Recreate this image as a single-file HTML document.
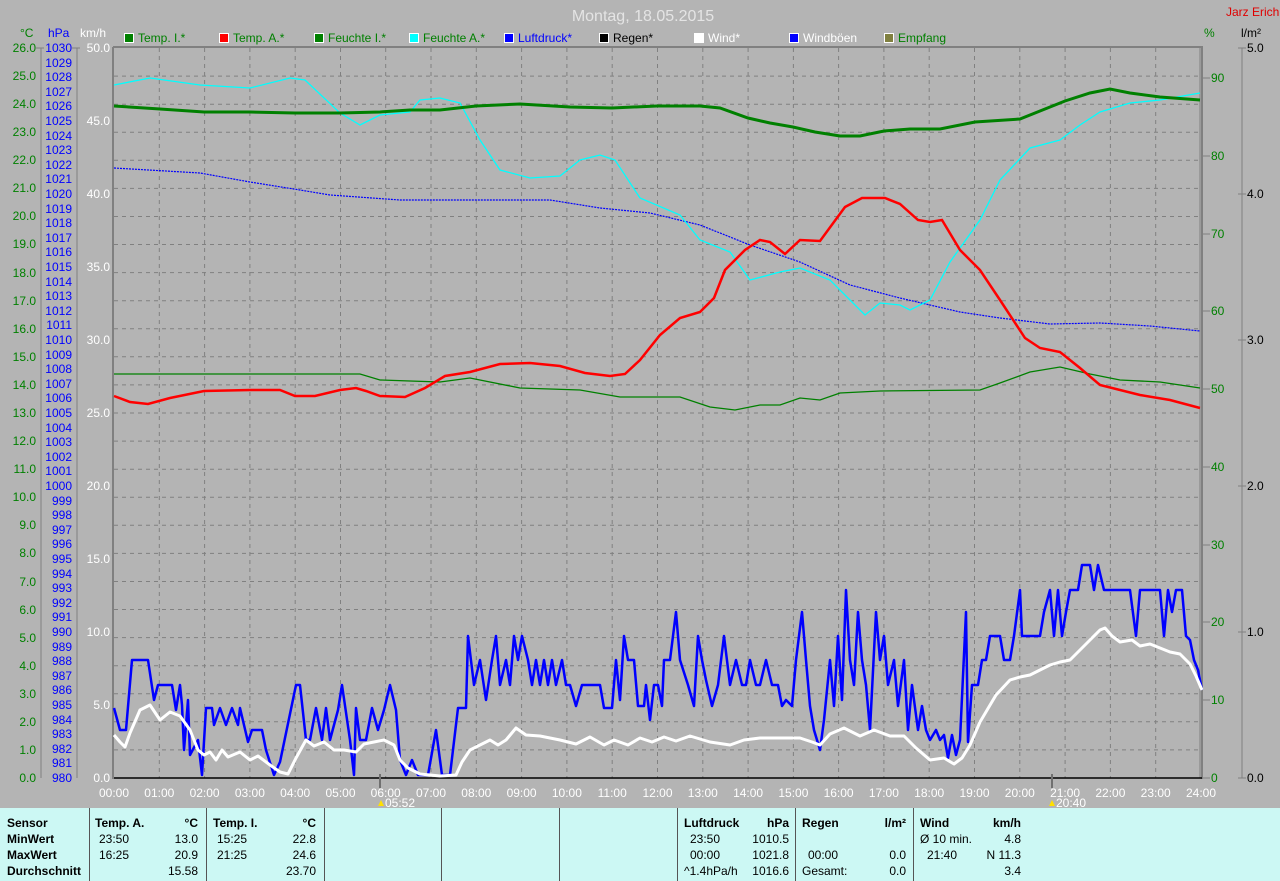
<!DOCTYPE html>
<html><head><meta charset="utf-8"><style>
html,body{margin:0;padding:0;background:#b4b4b4;width:1280px;height:881px;overflow:hidden}
svg{display:block}
text{font-family:"Liberation Sans",sans-serif;font-size:12px}
</style></head><body>
<svg width="1280" height="881" xmlns="http://www.w3.org/2000/svg">
<rect width="1280" height="881" fill="#b4b4b4"/>
<text x="643" y="21" text-anchor="middle" fill="#e4e4e4" style="font-size:16px">Montag, 18.05.2015</text>
<text x="1226" y="16" fill="#e00000">Jarz Erich</text>
<!-- legend -->
<g>
<rect x="124.5" y="33.5" width="9" height="9" fill="#008000" stroke="#fff"/><text x="138" y="42" fill="#008000">Temp. I.*</text>
<rect x="219.5" y="33.5" width="9" height="9" fill="#ff0000" stroke="#fff"/><text x="233" y="42" fill="#008000">Temp. A.*</text>
<rect x="314.5" y="33.5" width="9" height="9" fill="#008000" stroke="#fff"/><text x="328" y="42" fill="#008000">Feuchte I.*</text>
<rect x="409.5" y="33.5" width="9" height="9" fill="#00ffff" stroke="#fff"/><text x="423" y="42" fill="#008000">Feuchte A.*</text>
<rect x="504.5" y="33.5" width="9" height="9" fill="#0000ff" stroke="#fff"/><text x="518" y="42" fill="#0000ff">Luftdruck*</text>
<rect x="599.5" y="33.5" width="9" height="9" fill="#000" stroke="#fff"/><text x="613" y="42" fill="#000">Regen*</text>
<rect x="694.5" y="33.5" width="9" height="9" fill="#fff" stroke="#fff"/><text x="708" y="42" fill="#fff">Wind*</text>
<rect x="789.5" y="33.5" width="9" height="9" fill="#0000ff" stroke="#fff"/><text x="803" y="42" fill="#fff">Windböen</text>
<rect x="884.5" y="33.5" width="9" height="9" fill="#808040" stroke="#fff"/><text x="898" y="42" fill="#008000">Empfang</text>
</g>
<!-- axis headers -->
<text x="20" y="37" fill="#008000">°C</text>
<text x="48" y="37" fill="#0000ff">hPa</text>
<text x="80" y="37" fill="#fff">km/h</text>
<text x="1204" y="37" fill="#008000">%</text>
<text x="1241" y="37" fill="#000">l/m²</text>
<!-- axis lines -->
<g stroke="#808080" fill="none">
<line x1="41" y1="48" x2="41" y2="778"/>
<line x1="77" y1="48" x2="77" y2="778"/>
<line x1="1242" y1="48" x2="1242" y2="778"/>
</g>
<!-- grid -->
<g stroke="#808080" stroke-dasharray="4,4">
<line x1="159.3" y1="48" x2="159.3" y2="778"/><line x1="204.6" y1="48" x2="204.6" y2="778"/><line x1="249.9" y1="48" x2="249.9" y2="778"/><line x1="295.2" y1="48" x2="295.2" y2="778"/><line x1="340.5" y1="48" x2="340.5" y2="778"/><line x1="385.7" y1="48" x2="385.7" y2="778"/><line x1="431" y1="48" x2="431" y2="778"/><line x1="476.3" y1="48" x2="476.3" y2="778"/><line x1="521.6" y1="48" x2="521.6" y2="778"/><line x1="566.9" y1="48" x2="566.9" y2="778"/><line x1="612.2" y1="48" x2="612.2" y2="778"/><line x1="657.5" y1="48" x2="657.5" y2="778"/><line x1="702.8" y1="48" x2="702.8" y2="778"/><line x1="748.1" y1="48" x2="748.1" y2="778"/><line x1="793.4" y1="48" x2="793.4" y2="778"/><line x1="838.6" y1="48" x2="838.6" y2="778"/><line x1="883.9" y1="48" x2="883.9" y2="778"/><line x1="929.2" y1="48" x2="929.2" y2="778"/><line x1="974.5" y1="48" x2="974.5" y2="778"/><line x1="1019.8" y1="48" x2="1019.8" y2="778"/><line x1="1065.1" y1="48" x2="1065.1" y2="778"/><line x1="1110.4" y1="48" x2="1110.4" y2="778"/><line x1="1155.7" y1="48" x2="1155.7" y2="778"/>
<line x1="114" y1="76.1" x2="1201" y2="76.1"/><line x1="114" y1="104.2" x2="1201" y2="104.2"/><line x1="114" y1="132.2" x2="1201" y2="132.2"/><line x1="114" y1="160.3" x2="1201" y2="160.3"/><line x1="114" y1="188.4" x2="1201" y2="188.4"/><line x1="114" y1="216.5" x2="1201" y2="216.5"/><line x1="114" y1="244.5" x2="1201" y2="244.5"/><line x1="114" y1="272.6" x2="1201" y2="272.6"/><line x1="114" y1="300.7" x2="1201" y2="300.7"/><line x1="114" y1="328.8" x2="1201" y2="328.8"/><line x1="114" y1="356.8" x2="1201" y2="356.8"/><line x1="114" y1="384.9" x2="1201" y2="384.9"/><line x1="114" y1="413" x2="1201" y2="413"/><line x1="114" y1="441.1" x2="1201" y2="441.1"/><line x1="114" y1="469.2" x2="1201" y2="469.2"/><line x1="114" y1="497.2" x2="1201" y2="497.2"/><line x1="114" y1="525.3" x2="1201" y2="525.3"/><line x1="114" y1="553.4" x2="1201" y2="553.4"/><line x1="114" y1="581.5" x2="1201" y2="581.5"/><line x1="114" y1="609.5" x2="1201" y2="609.5"/><line x1="114" y1="637.6" x2="1201" y2="637.6"/><line x1="114" y1="665.7" x2="1201" y2="665.7"/><line x1="114" y1="693.8" x2="1201" y2="693.8"/><line x1="114" y1="721.8" x2="1201" y2="721.8"/><line x1="114" y1="749.9" x2="1201" y2="749.9"/>
</g>
<!-- frame -->
<g stroke="#808080" stroke-width="2" fill="none">
<line x1="113" y1="47" x2="1203" y2="47"/>
<line x1="113" y1="47" x2="113" y2="779"/>
<line x1="1202" y1="47" x2="1202" y2="779"/>
</g>
<line x1="1200" y1="48" x2="1200" y2="778" stroke="#808080"/>
<line x1="114" y1="778" x2="1202" y2="778" stroke="#000" stroke-width="1.5"/>
<!-- °C labels -->
<g fill="#008000" text-anchor="end">
<text x="36" y="52">26.0</text><text x="36" y="80">25.0</text><text x="36" y="108">24.0</text><text x="36" y="136">23.0</text><text x="36" y="164">22.0</text><text x="36" y="192">21.0</text><text x="36" y="220">20.0</text><text x="36" y="248">19.0</text><text x="36" y="277">18.0</text><text x="36" y="305">17.0</text><text x="36" y="333">16.0</text><text x="36" y="361">15.0</text><text x="36" y="389">14.0</text><text x="36" y="417">13.0</text><text x="36" y="445">12.0</text><text x="36" y="473">11.0</text><text x="36" y="501">10.0</text><text x="36" y="529">9.0</text><text x="36" y="557">8.0</text><text x="36" y="586">7.0</text><text x="36" y="614">6.0</text><text x="36" y="642">5.0</text><text x="36" y="670">4.0</text><text x="36" y="698">3.0</text><text x="36" y="726">2.0</text><text x="36" y="754">1.0</text><text x="36" y="782">0.0</text>
</g>
<!-- hPa labels -->
<g fill="#0000ff" text-anchor="end">
<text x="72" y="52">1030</text><text x="72" y="67">1029</text><text x="72" y="81">1028</text><text x="72" y="96">1027</text><text x="72" y="110">1026</text><text x="72" y="125">1025</text><text x="72" y="140">1024</text><text x="72" y="154">1023</text><text x="72" y="169">1022</text><text x="72" y="183">1021</text><text x="72" y="198">1020</text><text x="72" y="213">1019</text><text x="72" y="227">1018</text><text x="72" y="242">1017</text><text x="72" y="256">1016</text><text x="72" y="271">1015</text><text x="72" y="286">1014</text><text x="72" y="300">1013</text><text x="72" y="315">1012</text><text x="72" y="329">1011</text><text x="72" y="344">1010</text><text x="72" y="359">1009</text><text x="72" y="373">1008</text><text x="72" y="388">1007</text><text x="72" y="402">1006</text><text x="72" y="417">1005</text><text x="72" y="432">1004</text><text x="72" y="446">1003</text><text x="72" y="461">1002</text><text x="72" y="475">1001</text><text x="72" y="490">1000</text><text x="72" y="505">999</text><text x="72" y="519">998</text><text x="72" y="534">997</text><text x="72" y="548">996</text><text x="72" y="563">995</text><text x="72" y="578">994</text><text x="72" y="592">993</text><text x="72" y="607">992</text><text x="72" y="621">991</text><text x="72" y="636">990</text><text x="72" y="651">989</text><text x="72" y="665">988</text><text x="72" y="680">987</text><text x="72" y="694">986</text><text x="72" y="709">985</text><text x="72" y="724">984</text><text x="72" y="738">983</text><text x="72" y="753">982</text><text x="72" y="767">981</text><text x="72" y="782">980</text>
</g>
<!-- km/h labels -->
<g fill="#fff" text-anchor="end">
<text x="110" y="52">50.0</text><text x="110" y="125">45.0</text><text x="110" y="198">40.0</text><text x="110" y="271">35.0</text><text x="110" y="344">30.0</text><text x="110" y="417">25.0</text><text x="110" y="490">20.0</text><text x="110" y="563">15.0</text><text x="110" y="636">10.0</text><text x="110" y="709">5.0</text><text x="110" y="782">0.0</text>
</g>
<!-- ticks -->
<g stroke="#808080">
<line x1="36" y1="48" x2="44" y2="48"/><line x1="72" y1="48" x2="80" y2="48"/>
<line x1="1202" y1="78" x2="1210" y2="78"/><line x1="1202" y1="156" x2="1210" y2="156"/><line x1="1202" y1="234" x2="1210" y2="234"/><line x1="1202" y1="311" x2="1210" y2="311"/><line x1="1202" y1="389" x2="1210" y2="389"/><line x1="1202" y1="467" x2="1210" y2="467"/><line x1="1202" y1="545" x2="1210" y2="545"/><line x1="1202" y1="622" x2="1210" y2="622"/><line x1="1202" y1="700" x2="1210" y2="700"/><line x1="1202" y1="778" x2="1210" y2="778"/>
<line x1="1238" y1="48" x2="1246" y2="48"/><line x1="1238" y1="194" x2="1246" y2="194"/><line x1="1238" y1="340" x2="1246" y2="340"/><line x1="1238" y1="486" x2="1246" y2="486"/><line x1="1238" y1="632" x2="1246" y2="632"/><line x1="1238" y1="778" x2="1246" y2="778"/>
</g>
<g fill="#008000">
<text x="1211" y="82">90</text><text x="1211" y="160">80</text><text x="1211" y="238">70</text><text x="1211" y="315">60</text><text x="1211" y="393">50</text><text x="1211" y="471">40</text><text x="1211" y="549">30</text><text x="1211" y="626">20</text><text x="1211" y="704">10</text><text x="1211" y="782">0</text>
</g>
<g fill="#000">
<text x="1247" y="52">5.0</text><text x="1247" y="198">4.0</text><text x="1247" y="344">3.0</text><text x="1247" y="490">2.0</text><text x="1247" y="636">1.0</text><text x="1247" y="782">0.0</text>
</g>
<!-- x labels -->
<g fill="#fff" text-anchor="middle">
<text x="114" y="797">00:00</text><text x="159.3" y="797">01:00</text><text x="204.6" y="797">02:00</text><text x="249.9" y="797">03:00</text><text x="295.2" y="797">04:00</text><text x="340.5" y="797">05:00</text><text x="385.7" y="797">06:00</text><text x="431" y="797">07:00</text><text x="476.3" y="797">08:00</text><text x="521.6" y="797">09:00</text><text x="566.9" y="797">10:00</text><text x="612.2" y="797">11:00</text><text x="657.5" y="797">12:00</text><text x="702.8" y="797">13:00</text><text x="748.1" y="797">14:00</text><text x="793.4" y="797">15:00</text><text x="838.6" y="797">16:00</text><text x="883.9" y="797">17:00</text><text x="929.2" y="797">18:00</text><text x="974.5" y="797">19:00</text><text x="1019.8" y="797">20:00</text><text x="1065.1" y="797">21:00</text><text x="1110.4" y="797">22:00</text><text x="1155.7" y="797">23:00</text><text x="1201" y="797">24:00</text>
<text x="400" y="807">05:52</text><text x="1071" y="807">20:40</text>
</g>
<line x1="380" y1="774" x2="380" y2="788" stroke="#707070" stroke-width="2"/>
<line x1="1052" y1="774" x2="1052" y2="788" stroke="#707070" stroke-width="2"/>
<polygon points="378,806 381,800 384,806" fill="#ffe000"/>
<polygon points="1049,806 1052,800 1055,806" fill="#ffe000"/>
<!-- series -->
<polyline fill="none" stroke="#0000ff" stroke-dasharray="2,1" stroke-width="1.2" points="114,168 200,173 250,182 300,190 330,195 400,200 550,200 600,208 650,213 700,225 750,245 800,262 850,285 900,298 960,312 1000,318 1050,324 1100,323 1150,326 1200,331"/>
<polyline fill="none" stroke="#00ffff" stroke-width="1.3" points="114,85 150,78 200,85 250,88 290,78 305,80 340,113 360,125 380,115 410,112 420,100 440,98 460,103 480,140 500,170 530,178 560,176 580,160 600,155 615,160 640,198 680,215 700,240 730,252 750,280 780,272 800,268 830,280 850,300 865,315 880,303 900,305 910,310 930,300 950,262 980,220 1000,180 1030,148 1060,140 1080,125 1100,112 1130,103 1160,100 1200,93"/>
<polyline fill="none" stroke="#008000" stroke-width="1.3" points="114,374 360,374 380,380 440,382 470,378 520,388 580,390 620,397 680,397 710,407 735,410 760,405 780,405 800,398 820,400 840,393 880,391 980,390 1000,383 1030,372 1060,367 1090,374 1120,380 1160,382 1200,388"/>
<polyline fill="none" stroke="#008000" stroke-width="3" points="114,106 160,109 204,112 250,112 295,113 340,113 380,112 410,110 440,110 476,106 520,104 570,107 612,108 657,106 700,106 720,108 748,118 770,123 793,127 815,132 840,136 860,136 884,131 910,129 940,129 975,122 1020,119 1040,111 1065,101 1090,93 1110,89 1130,93 1160,97 1200,100"/>
<polyline fill="none" stroke="#ff0000" stroke-width="2.5" points="114,396 130,402 148,404 170,398 204,391 250,390 280,390 295,396 315,396 340,390 356,388 366,391 380,396 405,397 425,388 445,376 470,372 500,364 530,363 560,366 585,373 610,376 625,374 640,360 660,335 680,318 700,312 714,298 725,270 745,250 760,240 770,242 785,254 800,240 820,241 845,207 862,198 885,198 900,204 918,220 930,222 942,220 960,250 980,270 1000,300 1025,338 1040,348 1060,352 1080,368 1100,385 1140,395 1170,400 1200,408"/>
<polyline fill="none" stroke="#0000ff" stroke-width="2.5" stroke-linejoin="round" points="114,708 120,730 126,730 132,660 148,660 154,700 158,685 172,685 176,710 180,685 182,705 184,750 188,700 190,755 198,740 202,775 206,708 212,708 214,725 220,708 226,725 232,708 238,725 240,708 248,742 252,730 262,730 266,750 274,775 280,762 296,685 300,685 306,740 310,740 316,708 322,740 326,708 330,740 338,710 342,685 350,740 354,775 356,708 360,740 366,740 372,708 378,730 384,710 390,685 396,710 400,760 406,775 412,760 418,775 428,775 436,730 442,775 450,775 458,708 466,708 468,636 474,685 480,660 486,700 492,660 496,636 500,685 506,660 510,685 514,636 518,660 522,636 528,660 532,685 536,660 540,685 544,660 548,685 552,660 556,685 562,660 566,685 570,685 576,706 582,685 600,685 604,708 612,708 616,660 620,700 624,636 628,660 634,660 638,706 644,706 646,685 650,720 654,685 658,685 662,706 664,660 670,660 676,612 680,660 688,685 694,706 698,636 702,660 706,680 712,706 718,685 724,636 730,685 736,660 742,685 746,685 750,660 756,685 760,685 766,660 772,685 778,685 782,706 786,700 792,706 796,660 802,612 806,660 810,706 814,730 820,750 824,720 830,660 834,706 838,636 842,700 846,590 850,660 854,685 858,612 862,660 866,685 870,730 876,612 880,660 884,636 888,685 894,660 898,706 904,660 908,730 912,685 918,730 922,706 926,730 930,740 936,730 940,740 944,735 948,758 952,735 956,755 960,740 966,612 968,742 972,685 978,685 982,660 986,660 990,636 1000,636 1004,660 1010,660 1014,636 1020,590 1022,636 1040,636 1044,612 1050,590 1054,636 1058,590 1062,636 1066,612 1070,590 1078,590 1082,565 1090,565 1094,590 1098,565 1104,590 1130,590 1136,636 1140,590 1160,590 1164,636 1168,590 1172,612 1176,590 1182,590 1186,636 1190,640 1194,660 1198,670 1202,690"/>
<polyline fill="none" stroke="#fff" stroke-width="3" stroke-linejoin="round" points="114,735 120,742 125,747 130,733 140,710 150,705 160,720 170,712 180,716 190,730 198,750 204,755 210,752 216,760 222,750 228,757 240,752 250,760 258,756 270,765 280,772 288,774 296,758 306,740 314,746 324,742 334,750 344,750 356,752 364,744 374,742 384,740 394,745 400,760 408,768 420,774 440,776 456,775 462,762 470,750 480,745 490,740 498,745 506,740 516,728 526,735 540,736 560,740 576,744 590,737 604,745 614,740 628,745 640,738 652,742 664,737 676,741 690,736 710,742 730,745 744,740 760,738 780,738 800,738 812,742 820,745 830,734 844,728 860,736 874,730 890,736 904,736 916,748 930,760 944,758 954,764 962,758 970,745 980,722 996,695 1010,680 1020,677 1030,675 1040,670 1050,665 1060,662 1070,660 1080,650 1090,640 1100,630 1105,628 1112,636 1120,642 1132,640 1140,646 1150,644 1160,648 1170,652 1180,654 1190,664 1196,676 1202,690"/>
<!-- table -->
<rect x="0" y="808" width="1280" height="73" fill="#ccf8f4"/>
<g stroke="#555" stroke-width="1">
<line x1="89.5" y1="808" x2="89.5" y2="881"/><line x1="206.5" y1="808" x2="206.5" y2="881"/><line x1="324.5" y1="808" x2="324.5" y2="881"/><line x1="441.5" y1="808" x2="441.5" y2="881"/><line x1="559.5" y1="808" x2="559.5" y2="881"/><line x1="677.5" y1="808" x2="677.5" y2="881"/><line x1="795.5" y1="808" x2="795.5" y2="881"/><line x1="913.5" y1="808" x2="913.5" y2="881"/>
</g>
<g fill="#000" style="font-weight:bold">
<text x="7" y="827">Sensor</text><text x="7" y="843">MinWert</text><text x="7" y="859">MaxWert</text><text x="7" y="875">Durchschnitt</text>
<text x="95" y="827">Temp. A.</text><text x="198" y="827" text-anchor="end">°C</text>
<text x="213" y="827">Temp. I.</text><text x="316" y="827" text-anchor="end">°C</text>
<text x="684" y="827">Luftdruck</text><text x="789" y="827" text-anchor="end">hPa</text>
<text x="802" y="827">Regen</text><text x="906" y="827" text-anchor="end">l/m²</text>
<text x="920" y="827">Wind</text><text x="1021" y="827" text-anchor="end">km/h</text>
</g>
<g fill="#000">
<text x="99" y="843">23:50</text><text x="198" y="843" text-anchor="end">13.0</text>
<text x="99" y="859">16:25</text><text x="198" y="859" text-anchor="end">20.9</text>
<text x="198" y="875" text-anchor="end">15.58</text>
<text x="217" y="843">15:25</text><text x="316" y="843" text-anchor="end">22.8</text>
<text x="217" y="859">21:25</text><text x="316" y="859" text-anchor="end">24.6</text>
<text x="316" y="875" text-anchor="end">23.70</text>
<text x="690" y="843">23:50</text><text x="789" y="843" text-anchor="end">1010.5</text>
<text x="690" y="859">00:00</text><text x="789" y="859" text-anchor="end">1021.8</text>
<text x="684" y="875">^1.4hPa/h</text><text x="789" y="875" text-anchor="end">1016.6</text>
<text x="808" y="859">00:00</text><text x="906" y="859" text-anchor="end">0.0</text>
<text x="802" y="875">Gesamt:</text><text x="906" y="875" text-anchor="end">0.0</text>
<text x="920" y="843">Ø 10 min.</text><text x="1021" y="843" text-anchor="end">4.8</text>
<text x="927" y="859">21:40</text><text x="1021" y="859" text-anchor="end">N 11.3</text>
<text x="1021" y="875" text-anchor="end">3.4</text>
</g>
</svg>
</body></html>
